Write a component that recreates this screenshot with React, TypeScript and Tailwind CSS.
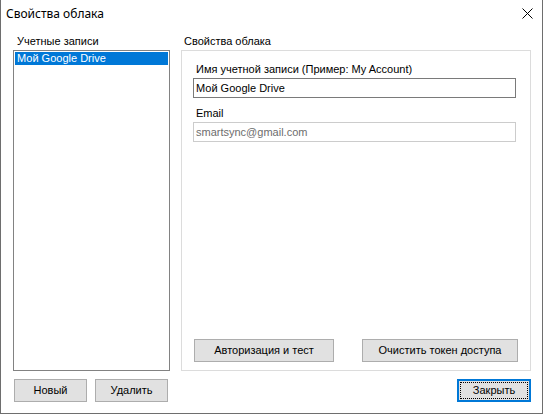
import React from 'react';

const btn =
  'h-[23px] border border-[#adadad] bg-[#e1e1e1] text-[11px] text-black flex items-center justify-center';

function CloseIcon() {
  return (
    <svg width="11" height="11" viewBox="0 0 11 11" className="block">
      <path d="M0.5 0.5 L10.5 10.5 M10.5 0.5 L0.5 10.5" stroke="#000" strokeWidth="1" fill="none" />
    </svg>
  );
}

export default function App() {
  return (
    <div
      className="w-[543px] h-[414px] bg-white border-l border-r border-b border-[#6e6e6e] flex flex-col overflow-hidden"
      style={{ fontFamily: '"Liberation Sans", Arial, sans-serif' }}
    >
      {/* заголовок окна */}
      <div className="h-[30px] flex items-center justify-between pl-[5px] pr-[9px] shrink-0">
        <span
          className="text-[12px] text-black leading-none -mt-[2px]"
          style={{ fontFamily: '"Noto Sans", "Open Sans", sans-serif' }}
        >
          Свойства облака
        </span>
        <div className="-mt-[4px]">
          <CloseIcon />
        </div>
      </div>

      <div className="flex flex-1 pl-[12px] pr-[11px]">
        {/* левая колонка */}
        <div className="w-[157px] flex flex-col">
          <div className="h-[20px] leading-[22px] text-[11px] text-black pl-[4px]">Учетные записи</div>
          <div className="h-[321px] border border-[#828282] p-[1px]">
            <div className="h-[13px] bg-[#0078d7] text-white text-[11px] leading-[13px] pl-[2px]">
              Мой Google Drive
            </div>
          </div>
          <div className="flex gap-[8px] mt-[8px] pl-[1px]">
            <button type="button" className={`${btn} w-[73px]`}>Новый</button>
            <button type="button" className={`${btn} w-[73px]`}>Удалить</button>
          </div>
        </div>

        {/* правая колонка */}
        <div className="ml-[11px] w-[350px] flex flex-col">
          <div className="h-[20px] leading-[22px] text-[11px] text-black pl-[3px]">Свойства облака</div>
          <div className="h-[321px] border border-[#dcdcdc] flex flex-col pl-[11px] pr-[14px] pt-[9px] pb-[8px]">
            <div className="h-[18px] leading-[18px] text-[11px] text-black pl-[3px]">
              Имя учетной записи (Пример: My Account)
            </div>
            <div className="h-[20px] border border-[#7a7a7a] text-[11px] text-black leading-[18px] pl-[2px]">
              Мой Google Drive
            </div>
            <div className="h-[18px] leading-[18px] text-[11px] text-black pl-[3px] mt-[6px]">Email</div>
            <div className="h-[20px] border border-[#cccccc] text-[11px] text-[#6d6d6d] leading-[18px] pl-[2px]">
              smartsync@gmail.com
            </div>
            <div className="mt-auto flex gap-[28px] pl-[1px]">
              <button type="button" className={`${btn} w-[140px] shrink-0`}>Авторизация и тест</button>
              <button type="button" className={`${btn} w-[156px] shrink-0`}>Очистить токен доступа</button>
            </div>
          </div>
          <div className="flex justify-end mt-[8px]">
            <button
              type="button"
              className="h-[23px] w-[74px] border-2 border-[#0078d7] bg-[#e1e1e1] p-[1px] text-[11px] text-black"
            >
              <div className="h-full w-full border border-dotted border-black flex items-center justify-center">
                Закрыть
              </div>
            </button>
          </div>
        </div>
      </div>
    </div>
  );
}
